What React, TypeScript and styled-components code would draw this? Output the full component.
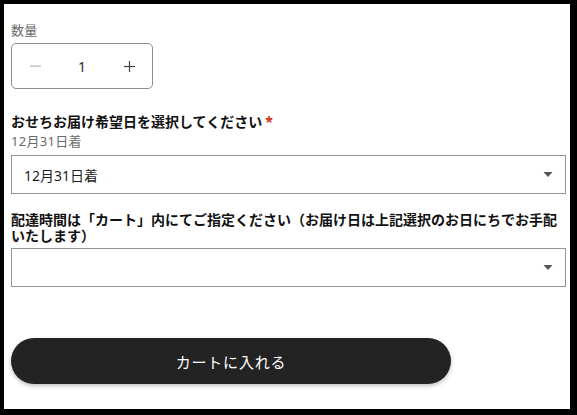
import styled, { createGlobalStyle } from "styled-components";

const GlobalStyle = createGlobalStyle`
  html, body {
    margin: 0;
    padding: 0;
    background: #000;
  }
  body {
    font-family: "Noto Sans", "Noto Sans CJK JP", sans-serif;
    color: #121212;
  }
`;

const Frame = styled.div`
  box-sizing: border-box;
  width: 577px;
  height: 415px;
  padding: 4px 7px 6px 4px;
  background: #000;
`;

const Panel = styled.div`
  box-sizing: border-box;
  height: 100%;
  background: #fff;
  padding: 17px 4px 0 7px;
  display: flex;
  flex-direction: column;
`;

const SmallLabel = styled.div`
  font-size: 13px;
  line-height: 18px;
  color: #6a6a6a;
  letter-spacing: 0.3px;
`;

const Stepper = styled.div`
  box-sizing: border-box;
  margin-top: 4px;
  width: 142px;
  height: 46px;
  border: 1px solid #8d8d8d;
  border-radius: 5px;
  display: grid;
  grid-template-columns: 46px 1fr 46px;
  align-items: center;
`;

const StepButton = styled.button<{ $disabled?: boolean }>`
  height: 100%;
  border: none;
  background: none;
  padding: 0;
  display: flex;
  align-items: center;
  justify-content: center;
  color: ${(p) => (p.$disabled ? "#b5b5b5" : "#444")};
`;

const Count = styled.div`
  text-align: center;
  font-size: 14px;
  color: #2a2a2a;
`;

const Heading = styled.div<{ $gap: number; $lh: number }>`
  margin-top: ${(p) => p.$gap}px;
  font-size: 14px;
  line-height: ${(p) => p.$lh}px;
  font-weight: 700;
  color: #121212;
`;

const Required = styled.span`
  color: #d72c0d;
  margin-left: 3px;
`;

const SelectBox = styled.div<{ $gap: number }>`
  box-sizing: border-box;
  margin-top: ${(p) => p.$gap}px;
  width: 100%;
  height: 39px;
  border: 1px solid #959595;
  display: flex;
  align-items: center;
  justify-content: space-between;
  padding: 0 12px 0 12px;
  font-size: 14px;
  color: #1e1e1e;
`;

const CartButton = styled.button`
  margin-top: 51px;
  width: 440px;
  height: 46px;
  border: none;
  border-radius: 23px;
  background: #232323;
  color: #fff;
  font-family: "Noto Sans", "Noto Sans CJK JP", sans-serif;
  font-size: 15px;
  letter-spacing: 0.8px;
  box-shadow: 0 2px 4px rgba(0, 0, 0, 0.25);
`;

const Caret = () => (
  <svg width="10" height="5" viewBox="0 0 10 5">
    <path d="M0.5 0 H9.5 L5 5 Z" fill="#555" />
  </svg>
);

const Minus = () => (
  <svg width="11" height="2" viewBox="0 0 11 2">
    <rect x="0" y="0.5" width="11" height="1.2" fill="currentColor" />
  </svg>
);

const Plus = () => (
  <svg width="11" height="11" viewBox="0 0 11 11">
    <rect x="0" y="4.9" width="11" height="1.2" fill="currentColor" />
    <rect x="4.9" y="0" width="1.2" height="11" fill="currentColor" />
  </svg>
);

export default function App() {
  return (
    <>
      <GlobalStyle />
      <Frame>
        <Panel>
          <SmallLabel>数量</SmallLabel>
          <Stepper>
            <StepButton $disabled>
              <Minus />
            </StepButton>
            <Count>1</Count>
            <StepButton>
              <Plus />
            </StepButton>
          </Stepper>

          <Heading $gap={23} $lh={20}>
            おせちお届け希望日を選択してください<Required>*</Required>
          </Heading>
          <SmallLabel>12月31日着</SmallLabel>
          <SelectBox $gap={5}>
            <span>12月31日着</span>
            <Caret />
          </SelectBox>

          <Heading $gap={18} $lh={16}>
            配達時間は「カート」内にてご指定ください（お届け日は上記選択のお日にちでお手配いたします）
          </Heading>
          <SelectBox $gap={4}>
            <span />
            <Caret />
          </SelectBox>

          <CartButton>カートに入れる</CartButton>
        </Panel>
      </Frame>
    </>
  );
}
